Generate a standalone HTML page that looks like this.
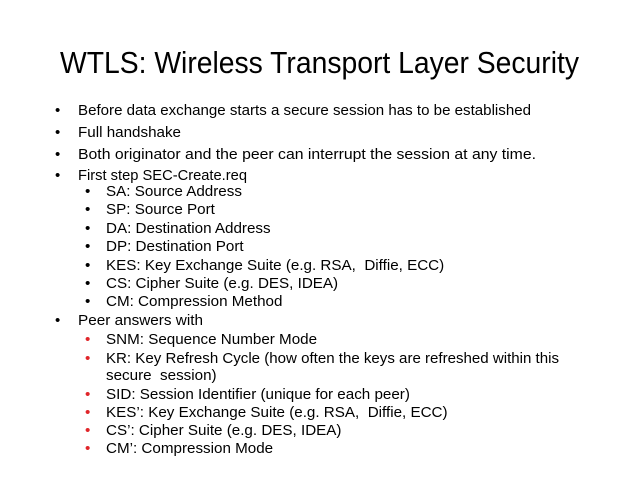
<!DOCTYPE html>
<html><head><meta charset="utf-8"><style>
html,body{margin:0;padding:0;background:#fff;}
svg{display:block;}
text{font-family:"Liberation Sans",Arial,sans-serif;fill:#000;white-space:pre;}
.b{font-size:15px;}
.s{font-size:15.2px;}
.r{fill:#e0262a;}
</style></head><body>
<svg width="638" height="478" viewBox="0 0 638 478">
<text x="60" y="73" font-size="31" textLength="519" lengthAdjust="spacingAndGlyphs">WTLS: Wireless Transport Layer Security</text>

<g class="b">
<text x="55" y="115">•</text><text x="78" y="115" textLength="453" lengthAdjust="spacingAndGlyphs">Before data exchange starts a secure session has to be established</text>
<text x="55" y="137">•</text><text x="78" y="137" textLength="103" lengthAdjust="spacingAndGlyphs">Full handshake</text>
<text x="55" y="159">•</text><text x="78" y="159" textLength="458" lengthAdjust="spacingAndGlyphs">Both originator and the peer can interrupt the session at any time.</text>
<text x="55" y="180">•</text><text x="78" y="180" textLength="169" lengthAdjust="spacingAndGlyphs">First step SEC-Create.req</text>
<text x="55" y="325">•</text><text x="78" y="325" textLength="125" lengthAdjust="spacingAndGlyphs">Peer answers with</text>
</g>

<g class="s">
<text x="85" y="196">•</text><text x="106" y="196">SA: Source Address</text>
<text x="85" y="214">•</text><text x="106" y="214">SP: Source Port</text>
<text x="85" y="233">•</text><text x="106" y="233">DA: Destination Address</text>
<text x="85" y="251">•</text><text x="106" y="251">DP: Destination Port</text>
<text x="85" y="270">•</text><text x="106" y="270">KES: Key Exchange Suite (e.g. RSA,  Diffie, ECC)</text>
<text x="85" y="288">•</text><text x="106" y="288">CS: Cipher Suite (e.g. DES, IDEA)</text>
<text x="85" y="306">•</text><text x="106" y="306">CM: Compression Method</text>

<text class="r" x="85" y="344">•</text><text x="106" y="344">SNM: Sequence Number Mode</text>
<text class="r" x="85" y="363">•</text><text x="106" y="363" textLength="453" lengthAdjust="spacingAndGlyphs">KR: Key Refresh Cycle (how often the keys are refreshed within this</text>
<text x="106" y="380">secure  session)</text>
<text class="r" x="85" y="399">•</text><text x="106" y="399">SID: Session Identifier (unique for each peer)</text>
<text class="r" x="85" y="417">•</text><text x="106" y="417">KES’: Key Exchange Suite (e.g. RSA,  Diffie, ECC)</text>
<text class="r" x="85" y="435">•</text><text x="106" y="435">CS’: Cipher Suite (e.g. DES, IDEA)</text>
<text class="r" x="85" y="453">•</text><text x="106" y="453">CM’: Compression Mode</text>
</g>
</svg>
</body></html>
